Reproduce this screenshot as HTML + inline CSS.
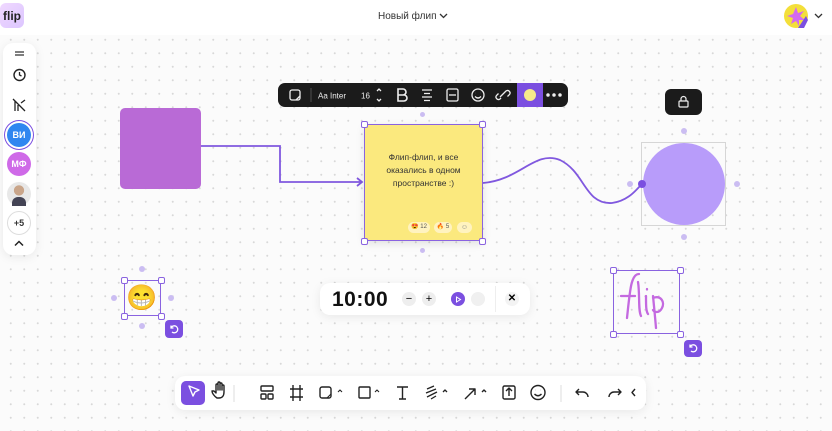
<!DOCTYPE html>
<html><head><meta charset="utf-8"><style>
*{margin:0;padding:0;box-sizing:border-box}
body{width:832px;height:431px;overflow:hidden;position:relative;font-family:"Liberation Sans","Noto Sans CJK SC",sans-serif;background:#fbfbfb;background-image:radial-gradient(circle,#d8d8d8 0.8px,transparent 1.2px);background-size:13.5px 13.5px;background-position:4px 6px}
.abs{position:absolute}
.hdr{left:0;top:0;width:832px;height:35px;background:#fff}
.panel{background:#fff;border-radius:10px;box-shadow:0 2px 10px rgba(0,0,0,.08)}
.tb{background:#1b1b1b;border-radius:7px;color:#eee}
.h{width:7px;height:7px;border:1.3px solid #8a63e0;background:#fff;border-radius:2px;position:absolute}
.dot{width:6px;height:6px;border-radius:50%;background:#cbbdf2;position:absolute}
.av{position:absolute;left:7px;width:24px;height:24px;border-radius:50%;color:#fff;font-size:9px;font-weight:bold;display:flex;align-items:center;justify-content:center}
</style></head><body>
<div class="abs hdr"></div>
<div class="abs" style="left:0;top:3px;width:24px;height:25px;border-radius:6px;background:linear-gradient(135deg,#f0d8ff,#dcc6ff);font-weight:bold;font-size:12px;color:#222;display:flex;align-items:center;justify-content:center">flip</div>
<div class="abs" style="left:378px;top:11px;font-size:10px;color:#333">Новый флип <svg width="9" height="6" viewBox="0 0 9 6"><path d="M1 1l3.5 3.5L8 1" stroke="#333" stroke-width="1.3" fill="none"/></svg></div>
<svg class="abs" style="left:784px;top:4px" width="24" height="24"><circle cx="12" cy="12" r="12" fill="#f3df3a"/><path d="M12 3l2 6 6-2-4 5 5 4-6 0 0 6-3-5-5 3 2-6-6-2 6-2z" fill="#d36af0"/><path d="M14 24l8-12 2 4-4 8z" fill="#7b4fe0"/></svg>
<svg class="abs" style="left:814px;top:13px" width="9" height="6"><path d="M1 1l3.5 3.5L8 1" stroke="#333" stroke-width="1.3" fill="none"/></svg>

<div class="abs panel" style="left:3px;top:43px;width:33px;height:212px"></div>
<svg class="abs" style="left:3px;top:43px" width="33" height="212">
<path d="M12 9h9M12 12h9" stroke="#333" stroke-width="1.3"/>
<circle cx="16.5" cy="32" r="5.5" stroke="#222" stroke-width="1.4" fill="none"/><path d="M16.5 29v3l2 1" stroke="#222" stroke-width="1.3" fill="none"/>
<path d="M10 56l12 12M12 58v10M15 62v6M18 60l4-3" stroke="#222" stroke-width="1.3" fill="none"/>
</svg>
<div class="av" style="top:123px;background:#2f86f0;box-shadow:0 0 0 2px #fff,0 0 0 3px #7b4fe0">ВИ</div>
<div class="av" style="top:152px;background:#cf6ae8">МФ</div>
<div class="av" style="top:182px;background:radial-gradient(circle at 50% 35%,#c9a58a 25%,#e8e8e8 27%);"><div style="width:14px;height:9px;background:#445;border-radius:6px 6px 0 0;margin-top:15px"></div></div>
<div class="av" style="top:211px;background:#fff;border:1px solid #ddd;color:#333">+5</div>
<svg class="abs" style="left:14px;top:240px" width="10" height="7"><path d="M1 5.5l4-4 4 4" stroke="#222" stroke-width="1.5" fill="none"/></svg>

<div class="abs" style="left:120px;top:108px;width:81px;height:81px;background:#b96ad6;border-radius:5px"></div>
<svg class="abs" style="left:0;top:0" width="832" height="431">
<path d="M201 146H280V182H362" stroke="#8058df" stroke-width="1.8" fill="none"/>
<path d="M357 178l5 4-5 4" stroke="#8058df" stroke-width="1.8" fill="none"/>
<path d="M483 183C520 180 535 150 560 160C585 172 585 205 612 203C628 201 636 190 642 184" stroke="#8058df" stroke-width="1.8" fill="none"/>
</svg>

<div class="abs tb" style="left:278px;top:83px;width:290px;height:24px"></div>
<div class="abs" style="left:517px;top:83px;width:26px;height:24px;background:#7b4fe0"></div>
<div class="abs" style="left:524px;top:89px;width:12px;height:12px;border-radius:50%;background:#f6e98a"></div>
<svg class="abs" style="left:278px;top:83px" width="290" height="24" fill="none" stroke="#eee" stroke-width="1.3">
<rect x="12" y="7" width="10" height="10" rx="2"/><path d="M18 17l4-4"/>
<path d="M33 5v14" stroke="#444"/>
<text x="40" y="15.5" fill="#eee" stroke="none" font-size="8" font-family="Liberation Sans">Aa Inter</text>
<text x="83" y="15.5" fill="#eee" stroke="none" font-size="8" font-family="Liberation Sans">16</text>
<path d="M99 8l2-2 2 2M99 16l2 2 2-2"/>
<path d="M120 6h5a3 3 0 010 6h-5zM120 12h6a3 3 0 010 6h-6zM120 6v12" stroke-width="1.6"/>
<path d="M144 7h10M146 10.5h6M144 14h10M146 17.5h6"/>
<rect x="169" y="6" width="11" height="12" rx="1.5"/><path d="M171 12h7"/>
<circle cx="200" cy="12" r="6"/><path d="M197 13.5q3 3 6 0M197.5 10h.1M202.5 10h.1"/>
<path d="M223 15l-1 1a2.5 2.5 0 01-3.5-3.5l2-2M227 9l1-1a2.5 2.5 0 013.5 3.5l-2 2M222 14l5-5"/>
<circle cx="270" cy="12" r="1.1" fill="#eee"/><circle cx="276" cy="12" r="1.1" fill="#eee"/><circle cx="282" cy="12" r="1.1" fill="#eee"/>
</svg>
<div class="dot" style="left:420px;top:112px;width:5px;height:5px"></div>
<div class="dot" style="left:420px;top:248px;width:5px;height:5px"></div>

<div class="abs" style="left:364px;top:124px;width:119px;height:117px;background:#fbe97e;border:1.3px solid #8a63e0;box-shadow:0 3px 8px rgba(0,0,0,.1)"></div>
<div class="abs" style="left:364px;top:151px;width:119px;text-align:center;font-size:8.5px;line-height:13px;color:#333">Флип-флип, и все<br>оказались в одном<br>пространстве :)</div>
<div class="abs" style="left:408px;top:222px;width:22px;height:11px;border-radius:6px;background:#fff3c0;font-size:6px;line-height:11px;text-align:center;color:#555">😍 12</div>
<div class="abs" style="left:434px;top:222px;width:18px;height:11px;border-radius:6px;background:#fff3c0;font-size:6px;line-height:11px;text-align:center;color:#555">🔥 5</div>
<div class="abs" style="left:457px;top:222px;width:15px;height:11px;border-radius:6px;background:#fff3c0;font-size:7px;line-height:11px;text-align:center;color:#888">☺</div>
<div class="h" style="left:361px;top:121px"></div><div class="h" style="left:479px;top:121px"></div>
<div class="h" style="left:361px;top:238px"></div><div class="h" style="left:479px;top:238px"></div>

<div class="abs tb" style="left:665px;top:89px;width:37px;height:26px;border-radius:6px"></div>
<svg class="abs" style="left:677px;top:95px" width="13" height="13" fill="none" stroke="#eee" stroke-width="1.2"><rect x="2" y="6" width="9" height="6" rx="1"/><path d="M4 6V4a2.5 2.5 0 015 0v2"/></svg>
<div class="abs" style="left:641px;top:142px;width:85px;height:84px;border:1px solid #d6d6d6"></div>
<div class="abs" style="left:643px;top:143px;width:82px;height:82px;border-radius:50%;background:#b89cfa"></div>
<div class="abs" style="left:638px;top:180px;width:8px;height:8px;border-radius:50%;background:#7b4fe0"></div>
<div class="dot" style="left:681px;top:128px"></div><div class="dot" style="left:681px;top:234px"></div>
<div class="dot" style="left:627px;top:181px"></div><div class="dot" style="left:734px;top:181px"></div>

<div class="abs" style="left:124px;top:280px;width:37px;height:36px;border:1.3px solid #8a63e0"></div>
<div class="abs" style="left:126px;top:282px;font-size:25px;line-height:32px">😁</div>
<div class="h" style="left:121px;top:277px"></div><div class="h" style="left:158px;top:277px"></div>
<div class="h" style="left:121px;top:313px"></div><div class="h" style="left:158px;top:313px"></div>
<div class="dot" style="left:139px;top:266px"></div><div class="dot" style="left:139px;top:323px"></div>
<div class="dot" style="left:111px;top:295px"></div><div class="dot" style="left:168px;top:295px"></div>
<div class="abs" style="left:165px;top:320px;width:18px;height:18px;border-radius:4px;background:#7b4fe0"></div>
<svg class="abs" style="left:169px;top:324px" width="10" height="10" fill="none" stroke="#fff" stroke-width="1.3"><path d="M2 4a3.5 3.5 0 111 4M2 1.5V4h2.5"/></svg>

<div class="abs panel" style="left:320px;top:283px;width:210px;height:32px"></div>
<div class="abs" style="left:332px;top:288px;font-size:21px;font-weight:bold;color:#111;letter-spacing:0.5px">10:00</div>
<div class="abs" style="left:402px;top:292px;width:14px;height:14px;border-radius:50%;background:#eee;font-size:11px;line-height:14px;text-align:center">−</div>
<div class="abs" style="left:422px;top:292px;width:14px;height:14px;border-radius:50%;background:#eee;font-size:11px;line-height:14px;text-align:center">+</div>
<div class="abs" style="left:451px;top:292px;width:14px;height:14px;border-radius:50%;background:#7b4fe0"></div>
<svg class="abs" style="left:455px;top:296px" width="7" height="7"><path d="M1.5 1l4 2.5-4 2.5z" fill="none" stroke="#fff" stroke-width="1"/></svg>
<div class="abs" style="left:471px;top:292px;width:14px;height:14px;border-radius:50%;background:#f0f0f0"></div>
<div class="abs" style="left:495px;top:286px;width:1px;height:26px;background:#eee"></div>
<div class="abs" style="left:505px;top:292px;width:14px;height:14px;border-radius:50%;background:#f3f3f3;font-size:10px;font-weight:bold;line-height:14px;text-align:center">✕</div>

<div class="abs" style="left:613px;top:270px;width:67px;height:64px;border:1.3px solid #8a63e0"></div>
<svg class="abs" style="left:613px;top:270px" width="67" height="64" fill="none" stroke="#c46ae0" stroke-width="2.3" stroke-linecap="round">
<path d="M26 4C18 4 17 20 14 48M8 26h14M25 12C27 24 25 40 28 46M33 26c0 10 0 15 2 18M34 19v.5M40 26c1 10 2 20 3 32M40 28c8-3 12 4 9 10s-8 4-9 2"/>
</svg>
<div class="h" style="left:610px;top:267px"></div><div class="h" style="left:677px;top:267px"></div>
<div class="h" style="left:610px;top:331px"></div><div class="h" style="left:677px;top:331px"></div>
<div class="abs" style="left:684px;top:340px;width:18px;height:17px;border-radius:4px;background:#7b4fe0"></div>
<svg class="abs" style="left:688px;top:343px" width="10" height="10" fill="none" stroke="#fff" stroke-width="1.3"><path d="M2 4a3.5 3.5 0 111 4M2 1.5V4h2.5"/></svg>

<div class="abs panel" style="left:175px;top:376px;width:471px;height:34px"></div>
<div class="abs" style="left:181px;top:381px;width:24px;height:24px;border-radius:5px;background:#7b4fe0"></div>
<svg class="abs" style="left:175px;top:376px" width="471" height="34" fill="none" stroke="#222" stroke-width="1.4" stroke-linejoin="round">
<path d="M14 10l10 4-4 2-2 4z" stroke="#fff"/>
<path d="M42 22c-3-2-5-5-5-7l2 0 2 2v-8a1 1 0 012 0v5-7a1 1 0 012 0v7-6a1 1 0 012 0v6-4a1 1 0 012 0v6c0 4-2 6-5 6z"/>
<path d="M59 9v17" stroke="#ddd" stroke-width="1"/><path d="M386 9v17" stroke="#ddd" stroke-width="1"/>
<rect x="86" y="10" width="12" height="5" rx="1"/><rect x="86" y="18" width="5" height="5" rx="1"/><rect x="93" y="18" width="5" height="5" rx="1"/>
<path d="M118 9v16M125 9v16M115 13h13M115 21h13"/>
<rect x="145" y="11" width="11" height="11" rx="2"/><path d="M152 22l4-4M163 16l2-2 2 2" stroke-width="1.1"/>
<rect x="184" y="11" width="11" height="11" rx="1"/><path d="M200 16l2-2 2 2" stroke-width="1.1"/>
<path d="M222 11h11M227.5 11v12M224 23h7"/>
<path d="M252 13l7-3M251 17l10-4M252 21l10-5M256 23l5-3M268 16l2-2 2 2" stroke-width="1.3"/>
<path d="M290 23l10-10M294 13h6v6M307 16l2-2 2 2"/>
<rect x="328" y="10" width="12" height="13" rx="1.5"/><path d="M334 20v-7M331 15l3-3 3 3"/>
<circle cx="363" cy="16.5" r="7"/><path d="M359.5 18q3.5 3.5 7 0M360.5 14h.1M365.5 14h.1"/>
<path d="M404 13l-3 3 3 3M401 16h7a5 5 0 015 5"/>
<path d="M443 13l3 3-3 3M446 16h-7a5 5 0 00-5 5"/>
<path d="M460 13l-3 3.5 3 3.5"/>
</svg>
</body></html>
